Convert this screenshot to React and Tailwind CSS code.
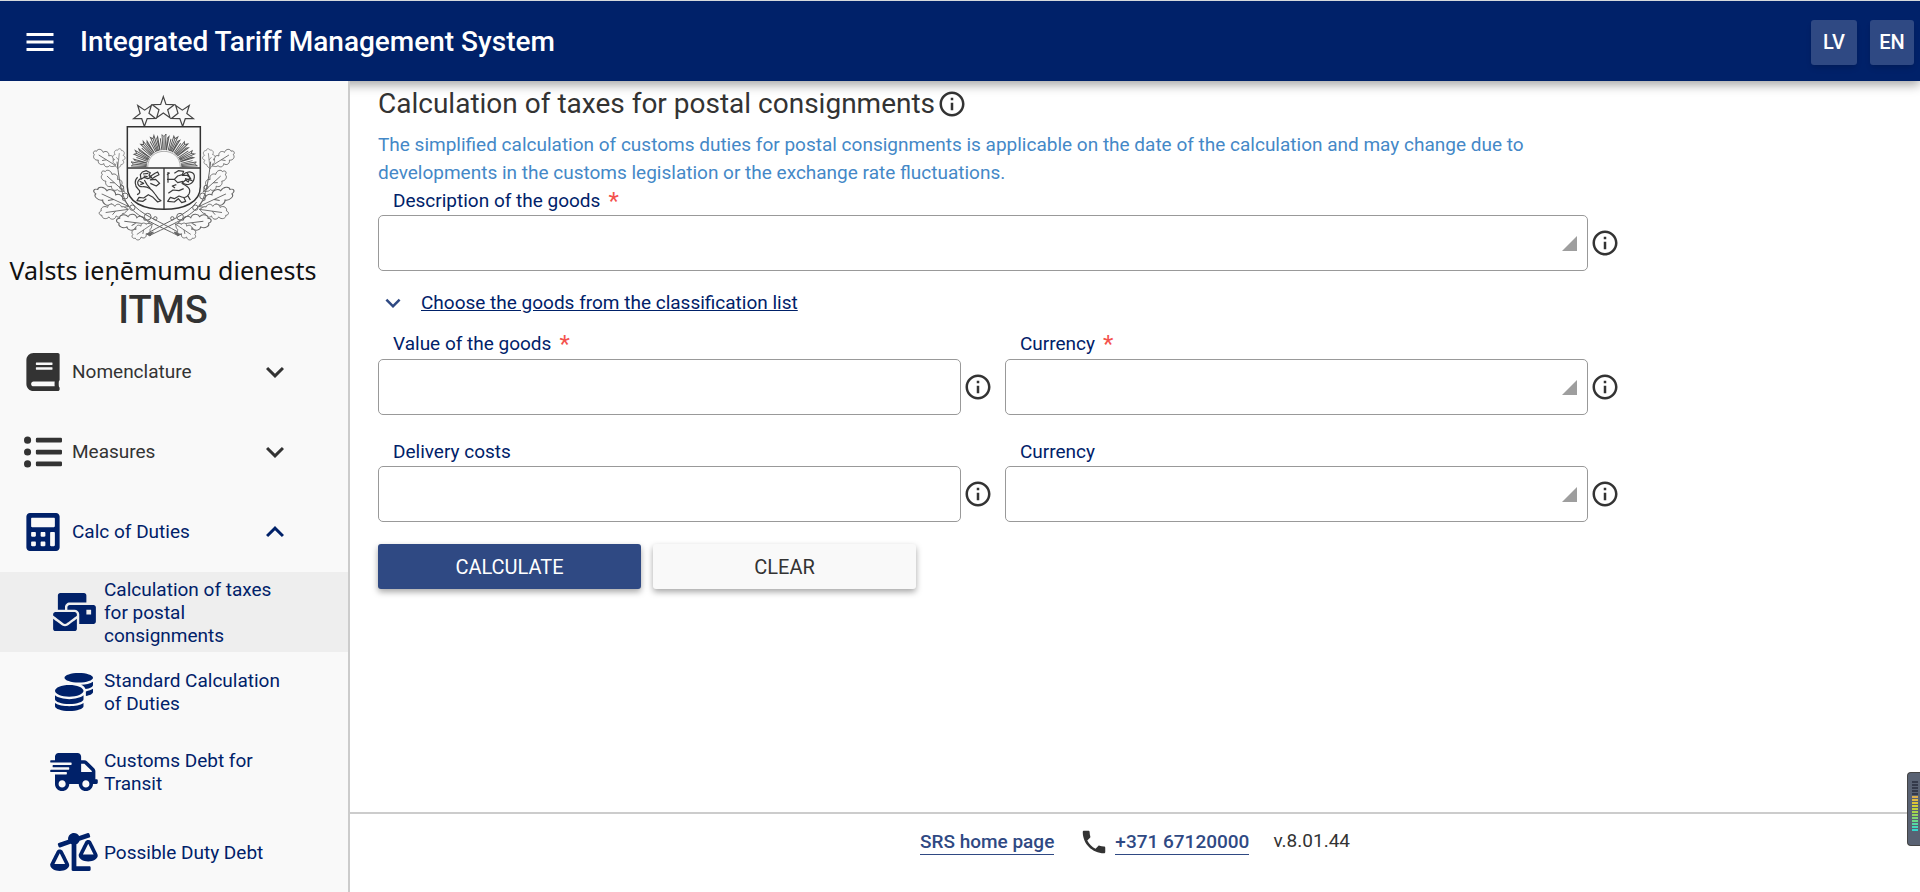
import React, { useState } from 'react';
import {
  FaBook,
  FaListUl,
  FaCalculator,
  FaMailBulk,
  FaCoins,
  FaShippingFast,
  FaBalanceScaleLeft,
} from 'react-icons/fa';
import { MdMenu, MdExpandMore, MdExpandLess, MdPhone, MdInfoOutline } from 'react-icons/md';

const mainItems = [
  { label: 'Nomenclature', icon: FaBook, size: 'h-[38px] w-[34px]' },
  { label: 'Measures', icon: FaListUl, size: 'h-[38px] w-[38px]' },
  { label: 'Calc of Duties', icon: FaCalculator, size: 'h-[38px] w-[34px]' },
];

const dutyItems = [
  { label: 'Calculation of taxes for postal consignments', icon: FaMailBulk, size: 'h-[38px] w-[43px]' },
  { label: 'Standard Calculation of Duties', icon: FaCoins, size: 'h-[38px] w-[38px]' },
  { label: 'Customs Debt for Transit', icon: FaShippingFast, size: 'h-[38px] w-12' },
  { label: 'Possible Duty Debt', icon: FaBalanceScaleLeft, size: 'h-[38px] w-12' },
];

// x, y of the stem, rotation, length and width scale
const leaves = [
  [88, 228, 212, 0.8, 0.8],
  [92, 236, 276, 0.6, 0.7],
  [112, 305, 222, 0.9, 0.8],
  [126, 350, 205, 1.16, 0.9],
  [124, 358, 172, 0.88, 0.85],
  [194, 404, 187, 1.06, 0.9],
  [196, 402, 146, 0.72, 0.8],
];

const leafPath =
  'M0 0C8-3 10-14 22-12C24-24 38-27 44-17C50-32 66-28 69-17C80-27 95-18 92-8C103-6 103 6 92 8C95 18 80 27 69 17C66 28 50 32 44 17C38 27 24 24 22 12C10 14 8 3 0 0L78 0M44 0L56-11';

const starPath = 'M0-34L8-11L33-10L13 5L20 29L0 15L-20 29L-13 5L-33-10L-8-11Z';

const Branch = () => (
  <g>
    {leaves.map(([x, y, angle, sx, sy], i) => (
      <path
        key={i}
        d={leafPath}
        fill="#f9f9f9"
        transform={`translate(${x} ${y}) rotate(${angle}) scale(${sx} ${sy})`}
      />
    ))}
    <path d="M90 215C96 262 100 300 116 334C140 376 190 396 268 434L276 428C215 392 160 374 132 336" />
    <circle cx="114" cy="318" r="9" />
    <circle cx="136" cy="353" r="8" />
    <circle cx="104" cy="292" r="6" />
    <circle cx="182" cy="380" r="10" />
    <circle cx="205" cy="385" r="5" />
    <path d="M262 426L282 432L272 438Z" fill="#666" />
  </g>
);

const Crest = () => {
  const rays = Array.from({ length: 17 }, (_, i) => -84 + i * 10.5);
  return (
    <svg width="152" height="154" viewBox="0 0 456 462" fill="none" stroke="#666" strokeWidth="3" aria-hidden="true">
      <Branch />
      <g transform="translate(461 0) scale(-1 1)">
        <Branch />
      </g>
      <g stroke="#444" strokeWidth="3.6" fill="#f9f9f9">
        <path d={starPath} transform="translate(173 74) rotate(36)" />
        <path d={starPath} transform="translate(286 74) rotate(-36)" />
        <path d={starPath} transform="translate(229 54)" />
      </g>
      <path d="M121 110H340V290C340 338 290 358 231 358C171 358 121 338 121 290Z" fill="#f9f9f9" stroke="#333" strokeWidth="4.5" />
      <g stroke="#555" strokeWidth="2.8">
        {rays.map((a, i) => (
          <path
            key={a}
            d={i % 2 ? 'M-3-52L-6-88L-2-94V-52M3-52L5-88' : 'M-3-52L-6-98L0-92L6-100L3-52M0-52V-92'}
            transform={`translate(231 232) rotate(${a})`}
          />
        ))}
      </g>
      <path d="M182 232C182 168 280 168 280 232" fill="#f9f9f9" stroke="#888" strokeWidth="2" />
      <path d="M121 234H340M231 234V358" stroke="#333" strokeWidth="4" />
      {/* lion */}
      <g stroke="#3a3a3a" strokeWidth="3.6" strokeLinejoin="round">
        <path d="M166 246L178 242L190 248L186 256L194 262L182 266L172 262L162 268L160 254Z M168 252L184 250M170 258L182 260" />
        <path d="M186 262L204 250L212 246L216 254L204 260L190 270L206 268L218 280L208 288L190 280" />
        <path d="M160 266C146 276 152 292 170 290C186 290 196 300 204 312L214 326L222 332L212 336L198 322L184 314L170 324L156 322L150 332L168 334L178 326" />
        <path d="M152 262C142 270 142 288 154 298C162 304 158 312 150 314M158 274L170 280L160 284M172 270L180 284L190 296" />
      </g>
      {/* griffin */}
      <g stroke="#3a3a3a" strokeWidth="3.6" strokeLinejoin="round">
        <path d="M243 246V278M240 254L248 248M240 268H262M262 250L274 242L290 244L286 254L272 258L262 268L272 278L288 274" />
        <path d="M286 256C302 240 324 244 322 262C320 282 300 290 286 278L296 270L304 276L308 262L300 256Z M300 248L312 268M294 266L316 272" />
        <path d="M284 280C300 288 314 296 306 312C298 326 288 324 276 318L262 326L250 322L242 334L262 336L274 326L284 338L296 334L290 322M244 310L258 300L276 302L290 296M302 316L310 330" />
        <path d="M268 284L256 288L264 294" />
      </g>
    </svg>
  );
};

const InfoButton = ({ label }) => (
  <button type="button" aria-label={label} className="shrink-0 text-[#333]">
    <MdInfoOutline className="block size-[30px]" />
  </button>
);

const Field = ({ id, label, required, select, tall }) => (
  <div className="min-w-0 flex-1">
    <label htmlFor={id} className={`flex items-center pl-[15px] text-[19px] leading-7 text-[#002169] ${tall ? 'h-[30px]' : 'h-7'}`}>
      {label}
      {required && <span className="ml-2 text-[24px] text-[#f4524d]">*</span>}
    </label>
    <div className="flex items-center gap-px">
      <div className="relative min-w-0 flex-1 pr-px">
        {select ? (
          <>
            <select id={id} className="block h-14 w-full appearance-none rounded-[5px] border border-[#999] bg-white px-4 text-[19px]">
              <option value=""></option>
            </select>
            <svg className="pointer-events-none absolute right-3 bottom-5" width="15" height="15" viewBox="0 0 15 15" fill="#9e9e9e" aria-hidden="true">
              <path d="M15 0V15H0Z" />
            </svg>
          </>
        ) : (
          <input id={id} type="text" className="block h-14 w-full rounded-[5px] border border-[#999] bg-white px-4 text-[19px]" />
        )}
      </div>
      <InfoButton label={`${label} info`} />
    </div>
  </div>
);

const levels = [
  'bg-[#343a4a]',
  'bg-[#343a4a]',
  'bg-[#343a4a]',
  'bg-[#343a4a]',
  'bg-[#343a4a]',
  'bg-[#dcb04c]',
  'bg-[#dfba42]',
  'bg-[#dcc437]',
  'bg-[#d2d035]',
  'bg-[#c0d23d]',
  'bg-[#a8d549]',
  'bg-[#95d65d]',
  'bg-[#80d873]',
  'bg-[#6ad98a]',
  'bg-[#56d8a2]',
  'bg-[#45d7b8]',
  'bg-[#35d6cc]',
];

const App = () => {
  const [open, setOpen] = useState(true);

  return (
    <div className="flex min-h-screen flex-col bg-white font-[Roboto,sans-serif] text-[#333]">
      {/* Top bar */}
      <header className="relative z-10 flex h-[81px] items-center border-t border-[#d5d9dc] bg-[#002169] pt-0.5 pr-[6px] pl-[22px] text-white shadow-[0_4px_10px_rgba(0,0,0,0.35)]">
        <button type="button" aria-label="Menu">
          <MdMenu className="block size-9" />
        </button>
        <h1 className="ml-[22px] flex-1 text-[28px] font-medium">Integrated Tariff Management System</h1>
        <div className="flex gap-[13px] text-[20px] font-medium">
          <button type="button" className="h-[45px] w-[46px] rounded-[3px] bg-[#2f4983] shadow-md">LV</button>
          <button type="button" className="h-[45px] w-[44px] rounded-[3px] bg-[#2f4983] shadow-md">EN</button>
        </div>
      </header>

      <div className="flex flex-1">
        {/* Sidebar */}
        <aside className="relative z-20 w-[350px] shrink-0 border-r-2 border-[#ccc] bg-[#f9f9f9]">
          <div className="flex h-[251px] w-[326px] flex-col items-center pt-[9px]">
            <Crest />
            <div className="mt-[6px] text-[25px] leading-10 whitespace-nowrap text-[#111] font-['Noto_Sans',sans-serif]">
              Valsts ieņēmumu dienests
            </div>
            <div className="text-[38px] leading-10 font-medium">ITMS</div>
          </div>
          <nav>
            {mainItems.map(({ label, icon: Icon, size }, i) => {
              const active = i === 2;
              return (
                <button
                  key={label}
                  type="button"
                  onClick={() => active && setOpen(!open)}
                  className={`flex h-20 w-full items-center pr-[55px] pl-6 text-left text-[19px] ${active ? 'text-[#002169]' : 'text-[#333]'}`}
                >
                  <span className="flex w-[38px] justify-center">
                    <Icon className={`shrink-0 ${size}`} />
                  </span>
                  <span className="ml-[10px] flex-1">{label}</span>
                  {active && open ? <MdExpandLess className="size-9" /> : <MdExpandMore className="size-9" />}
                </button>
              );
            })}
            {open &&
              dutyItems.map(({ label, icon: Icon, size }, i) => (
                <a
                  key={label}
                  href="#"
                  className={`flex h-20 items-center pl-[50px] text-[19px] leading-[23px] text-[#002169] ${i === 0 ? 'bg-[#eee]' : ''}`}
                >
                  <span className="flex w-12 shrink-0 justify-center">
                    <Icon className={`shrink-0 ${size}`} />
                  </span>
                  <span className="ml-[6px] w-[180px]">{label}</span>
                </a>
              ))}
          </nav>
        </aside>

        <div className="flex min-w-0 flex-1 flex-col">
          <main className="w-full max-w-[1270px] flex-1 pl-7">
            <h2 className="flex items-center gap-0.5 pt-[5px] text-[28px] leading-9">
              Calculation of taxes for postal consignments
              <InfoButton label="Page info" />
            </h2>
            <p className="mt-[9px] max-w-[1160px] text-[19px] leading-7 text-[#4488c7]">
              The simplified calculation of customs duties for postal consignments is applicable on the date of the
              calculation and may change due to developments in the customs legislation or the exchange rate fluctuations.
            </p>

            <form onSubmit={(e) => e.preventDefault()}>
              <Field id="description" label="Description of the goods" required select />
              <button type="button" className="mt-[17px] flex items-center gap-[13px] text-[19px] text-[#002169]">
                <MdExpandMore className="size-[30px] text-[#2f4983]" />
                <span className="underline">Choose the goods from the classification list</span>
              </button>
              <div className="mt-[11px] flex gap-3">
                <Field id="value" label="Value of the goods" required tall />
                <Field id="currency" label="Currency" required select tall />
              </div>
              <div className="mt-[23px] flex gap-3">
                <Field id="delivery" label="Delivery costs" />
                <Field id="delivery-currency" label="Currency" select />
              </div>
              <div className="mt-[22px] flex gap-3 text-[20px]">
                <button type="submit" className="h-[45px] w-[263px] rounded-[3px] bg-[#2f4983] text-white shadow-[0_3px_6px_rgba(0,0,0,0.35)]">
                  CALCULATE
                </button>
                <button type="reset" className="h-[45px] w-[263px] rounded-[3px] bg-[#f9f9f9] shadow-[0_3px_6px_rgba(0,0,0,0.35)]">
                  CLEAR
                </button>
              </div>
            </form>
          </main>

          {/* Footer */}
          <footer className="flex h-20 items-start justify-center border-t-2 border-[#ccc] pt-[13px] text-[19px]">
            <a href="#" className="mt-[3px] border-b border-[#2f4983] leading-6 font-medium text-[#2f4983]">SRS home page</a>
            <MdPhone className="ml-[25px] size-[30px]" />
            <a href="tel:+37167120000" className="mt-[3px] ml-[6px] border-b border-[#2f4983] leading-6 font-medium text-[#2f4983]">+371 67120000</a>
            <span className="ml-6 leading-7">v.8.01.44</span>
          </footer>
        </div>
      </div>

      {/* Level meter on the window edge */}
      <div className="fixed right-0 bottom-[46px] z-30 flex h-[74px] w-[13px] flex-col gap-px rounded-l-[4px] border border-r-0 border-[#444] bg-[#596273] pt-2 pr-[2px] pl-1">
        {levels.map((color, i) => (
          <span key={i} className={`h-[2px] w-[6px] shrink-0 ${color}`} />
        ))}
      </div>
    </div>
  );
};

export default App;
